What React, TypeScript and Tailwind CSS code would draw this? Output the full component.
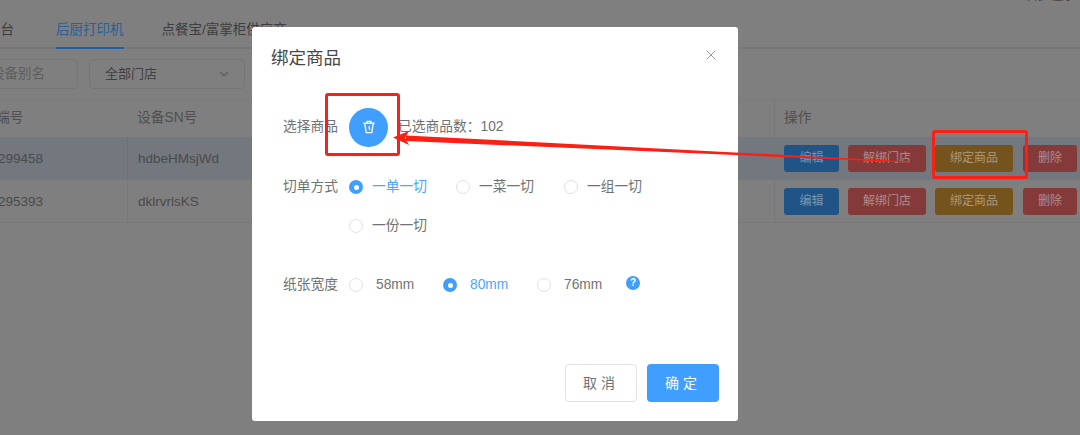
import React from 'react';
import { X, ChevronDown } from 'lucide-react';

const font = { fontFamily: '"Liberation Sans", "Noto Sans CJK SC", sans-serif' };

const Radio = ({ label, checked, wide, className = '' }: { label: string; checked?: boolean; wide?: boolean; className?: string }) => (
  <div className={`flex items-center ${wide ? 'gap-[13px]' : 'gap-[9px]'} ${className}`}>
    {checked ? (
      <span className="flex h-[14px] w-[14px] items-center justify-center rounded-full bg-[#409eff]">
        <span className="h-[5px] w-[5px] rounded-full bg-white" />
      </span>
    ) : (
      <span className="h-[14px] w-[14px] rounded-full border border-[#dfe2e8] bg-white" />
    )}
    <span className={`text-[13.75px] leading-[20px] ${checked ? 'text-[#4ea5ff]' : 'text-[#6f7276]'}`}>{label}</span>
  </div>
);

const RowActions = () => (
  <div className="flex gap-[9px] text-[12px]">
    <button className="h-[27px] w-[55px] rounded-[3px] bg-[#205487] text-[#7d96ae]">编辑</button>
    <button className="h-[27px] w-[78px] rounded-[3px] bg-[#853a3a] text-[#b08c8c]">解绑门店</button>
    <button className="h-[27px] w-[78px] rounded-[3px] bg-[#75531d] text-[#ab9a7c]">绑定商品</button>
    <button className="ml-px h-[27px] w-[54px] rounded-[3px] bg-[#853a3a] text-[#b08c8c]">删除</button>
  </div>
);

const Row = ({ id, sn, active }: { id: string; sn: string; active?: boolean }) => (
  <div className={`flex h-[43px] items-center border-b border-[#787878] text-[13.5px] text-[#4a4a4a] ${active ? 'bg-[#72787e]' : ''}`}>
    <div className={`flex h-full w-[128px] items-center border-r pt-[2px] indent-[-2px] ${active ? 'border-[#6c7176]' : 'border-[#787878]'}`}>{id}</div>
    <div className="w-[646px] pl-[10px] pt-[2px]">{sn}</div>
    <div className="flex h-full flex-1 items-center border-l border-[#787878] pl-[9px]">
      <RowActions />
    </div>
  </div>
);

export default function App() {
  return (
    <div className="relative h-[435px] w-[1080px] overflow-hidden bg-[#7f7f7f]" style={font}>
      {/* dimmed page */}
      <div className="absolute right-[6px] top-[-13px] text-[12px] text-[#3f3f3f]">百步程序</div>
      <div className="flex h-[49px] items-end gap-[38px] border-b-2 border-[#767676] text-[13.5px] text-[#3d3d3d]">
        <div className="ml-[-13px] pb-[7px] leading-[20px]">柜台</div>
        <div className="-mb-[2px] ml-[4px] border-b-2 border-[#205d9c] pb-[7px] leading-[20px] text-[#28609a]">后厨打印机</div>
        <div className="pb-[7px] leading-[20px]">点餐宝/富掌柜供应商</div>
      </div>

      <div className="mt-[10px] flex h-[30px] gap-[11px]">
        <div className="ml-[-15px] flex w-[93px] items-center rounded-[4px] border border-[#767676] pl-[5px] text-[13.5px] text-[#5e5e5e]">设备别名</div>
        <div className="flex w-[156px] items-center justify-between rounded-[4px] border border-[#767676] pl-[15px] pr-[13px] text-[13px] text-[#3f3f3f]">
          全部门店
          <ChevronDown size={14} className="text-[#5e5e5e]" />
        </div>
      </div>

      <div className="mt-[10px] border-t border-[#7b7b7b]">
        <div className="flex h-[37px] items-center text-[13.75px] text-[#4f4f4f]">
          <div className="w-[128px] indent-[-4px]">端号</div>
          <div className="w-[646px] pl-[9px]">设备SN号</div>
          <div className="flex h-full flex-1 items-center border-l border-[#787878] pl-[9px]">操作</div>
        </div>
        <Row id="299458" sn="hdbeHMsjWd" active />
        <Row id="295393" sn="dklrvrlsKS" />
      </div>

      {/* dialog */}
      <div className="absolute left-[252px] top-[27px] flex h-[394px] w-[486px] flex-col rounded-[3px] bg-white text-[#6f7276]">
        <div className="flex items-start justify-between pl-[19px] pr-[19px] pt-[18px]">
          <span className="text-[17.5px] leading-[26px] text-[#45474b]">绑定商品</span>
          <X size={16} strokeWidth={1.4} className="mt-[2px] text-[#909399]" />
        </div>

        <div className="mt-[36px] flex h-[40px] items-center pl-[31px] text-[13.75px]">
          <span className="w-[66px]">选择商品</span>
          <span className="flex h-[39px] w-[39px] items-center justify-center rounded-full bg-[#409eff]">
            <svg width="14" height="14" viewBox="0 0 14 14" fill="none" stroke="white" strokeWidth="1.3" strokeLinejoin="round">
              <path d="M1.2 3.2H12.8" />
              <path d="M5 3V1.4H9V3" />
              <path d="M2.8 3.4L4.2 12.6H9.8L11.2 3.4" />
              <path d="M7.8 6C6.6 7.2 6.8 9 8.2 9.8" />
            </svg>
          </span>
          <span className="ml-[10px]">已选商品数：102</span>
        </div>

        <div className="mt-[30px] flex pl-[31px] text-[13.75px]">
          <span className="w-[66px] leading-[20px]">切单方式</span>
          <div className="flex w-[320px] flex-wrap gap-y-[19px]">
            <Radio label="一单一切" checked className="w-[107px]" />
            <Radio label="一菜一切" className="w-[108px]" />
            <Radio label="一组一切" className="w-[105px]" />
            <Radio label="一份一切" />
          </div>
        </div>

        <div className="mt-[39px] flex items-center pl-[31px] text-[13.75px]">
          <span className="w-[66px] leading-[20px]">纸张宽度</span>
          <Radio label="58mm" wide className="w-[94px]" />
          <Radio label="80mm" wide checked className="w-[94px]" />
          <Radio label="76mm" wide className="w-[89px]" />
          <span className="mt-[-4px] flex h-[14px] w-[14px] items-center justify-center rounded-full bg-[#409eff] text-[10px] font-bold leading-none text-white">?</span>
        </div>

        <div className="mt-auto flex justify-end gap-[10px] pb-[19px] pr-[19px] text-[14px]">
          <button className="h-[38px] w-[72px] rounded-[4px] border border-[#dfe2e8] bg-white tracking-[4px] text-[#6f7276]">取消</button>
          <button className="h-[38px] w-[72px] rounded-[4px] bg-[#409eff] tracking-[4px] text-white">确定</button>
        </div>
      </div>

      {/* red annotations drawn over the screenshot */}
      <div className="absolute left-[325px] top-[93px] h-[63px] w-[75px] rounded-[3px] border-[3px] border-[#fb1f14]" />
      <div className="absolute left-[932px] top-[130px] h-[49px] w-[96px] rounded-[3px] border-[3px] border-[#fb1f14]" />
      <svg className="pointer-events-none absolute left-0 top-0" width="1080" height="435" viewBox="0 0 1080 435" fill="none">
        <path d="M406 135.5L910 161.5L910 162.5L406 141Z" fill="#fb1f14" />
        <path d="M393 137.5L409 131L405 138L409 145Z" fill="#fb1f14" />
      </svg>
    </div>
  );
}
